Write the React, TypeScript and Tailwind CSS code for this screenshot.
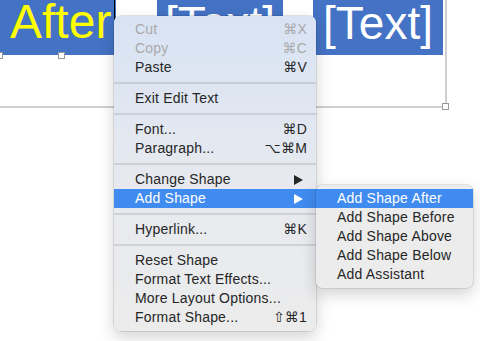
import React from 'react';

type Item =
  | { kind: 'sep' }
  | { kind: 'item'; label: string; shortcut?: string; disabled?: boolean; submenu?: boolean; active?: boolean };

const items: Item[] = [
  { kind: 'item', label: 'Cut', shortcut: '⌘X', disabled: true },
  { kind: 'item', label: 'Copy', shortcut: '⌘C', disabled: true },
  { kind: 'item', label: 'Paste', shortcut: '⌘V' },
  { kind: 'sep' },
  { kind: 'item', label: 'Exit Edit Text' },
  { kind: 'sep' },
  { kind: 'item', label: 'Font...', shortcut: '⌘D' },
  { kind: 'item', label: 'Paragraph...', shortcut: '⌥⌘M' },
  { kind: 'sep' },
  { kind: 'item', label: 'Change Shape', submenu: true },
  { kind: 'item', label: 'Add Shape', submenu: true, active: true },
  { kind: 'sep' },
  { kind: 'item', label: 'Hyperlink...', shortcut: '⌘K' },
  { kind: 'sep' },
  { kind: 'item', label: 'Reset Shape' },
  { kind: 'item', label: 'Format Text Effects...' },
  { kind: 'item', label: 'More Layout Options...' },
  { kind: 'item', label: 'Format Shape...', shortcut: '⇧⌘1' },
];

const subItems = ['Add Shape After', 'Add Shape Before', 'Add Shape Above', 'Add Shape Below', 'Add Assistant'];

const Arrow = ({ white }: { white?: boolean }) => (
  <svg width="9" height="10" viewBox="0 0 9 10" className="mr-[4px]">
    <path d="M0 0 L9 5 L0 10 Z" fill={white ? '#ffffff' : '#262626'} />
  </svg>
);

const Handle = ({ className }: { className: string }) => (
  <div className={`absolute w-[7px] h-[7px] bg-white border border-[#9a9a9a] ${className}`} />
);

export default function App() {
  return (
    <div className="relative w-[480px] h-[341px] bg-white overflow-hidden font-['Liberation_Sans','DejaVu_Sans',sans-serif]">
      {/* SmartArt canvas */}
      <div className="relative w-[447px] h-[108px] border-r-2 border-b-2 border-[#cfcfcf]">
        <div className="flex h-[55px]">
          <div className="relative w-[116px] bg-[#4472c4] pl-[10px] text-[48px] leading-[44px] text-[#ffff00]">
            After
            <div className="absolute right-[1px] top-0 w-[1px] h-[20px] bg-black" />
          </div>
          <div className="ml-[41px] w-[126px] bg-[#4472c4] flex justify-center text-[46px] leading-[46px] text-white">
            [Text]
          </div>
          <div className="ml-[30px] w-[130px] bg-[#4472c4] flex justify-center text-[46px] leading-[46px] text-white">
            [Text]
          </div>
        </div>
        <Handle className="left-[58px] top-[52px]" />
        <Handle className="left-[-4px] top-[52px]" />
        <Handle className="left-[442px] top-[103px]" />
      </div>

      {/* Context menu */}
      <div className="absolute left-[114px] top-[16px] w-[202px] rounded-[6px] py-[4px] bg-gradient-to-b from-[#d8e3f4] via-[#e6e9ef] to-[#ececec] shadow-[0_0_0_0.5px_rgba(0,0,0,0.18),0_6px_16px_rgba(0,0,0,0.18)] text-[14px] tracking-[0.2px] text-[#262626]">
        {items.map((it, i) =>
          it.kind === 'sep' ? (
            <div key={i} className="h-[12px] flex items-center">
              <div className="h-[2px] w-full bg-black/10" />
            </div>
          ) : (
            <div
              key={i}
              className={`h-[19px] flex items-center justify-between pl-[21px] pr-[9px] ${
                it.active ? 'bg-[#3f8bf0] text-white' : it.disabled ? 'text-[#a9a9a9]' : ''
              }`}
            >
              <span>{it.label}</span>
              {it.shortcut && <span>{it.shortcut}</span>}
              {it.submenu && <Arrow white={it.active} />}
            </div>
          )
        )}
      </div>

      {/* Submenu */}
      <div className="absolute left-[316px] top-[185px] w-[157px] rounded-[6px] py-[4px] bg-[#ececec] shadow-[0_0_0_0.5px_rgba(0,0,0,0.18),0_6px_16px_rgba(0,0,0,0.18)] text-[14px] tracking-[0.2px] text-[#262626]">
        {subItems.map((s, i) => (
          <div key={s} className={`h-[19px] flex items-center pl-[21px] ${i === 0 ? 'bg-[#3f8bf0] text-white' : ''}`}>
            {s}
          </div>
        ))}
      </div>
    </div>
  );
}
